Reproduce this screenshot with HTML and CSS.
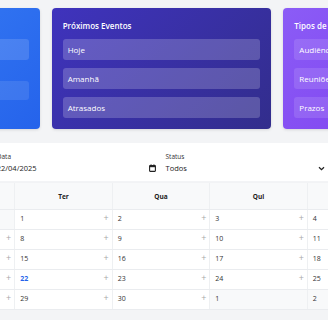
FILE: index.html
```html
<!DOCTYPE html>
<html lang="pt-BR">
<head>
<meta charset="utf-8">
<link rel="stylesheet" href="styles.css">
</head>
<body>
<div class="page">
  <section class="cards">
    <div class="card card-blue">
      <h3 class="card-title">Resumo</h3>
      <div class="stat stat-a"></div>
      <div class="stat stat-b"></div>
    </div>
    <div class="card card-indigo">
      <h3 class="card-title">Próximos Eventos</h3>
      <ul class="card-list">
        <li class="card-item">Hoje</li>
        <li class="card-item">Amanhã</li>
        <li class="card-item">Atrasados</li>
      </ul>
    </div>
    <div class="card card-purple">
      <h3 class="card-title">Tipos de Eventos</h3>
      <ul class="card-list">
        <li class="card-item">Audiências</li>
        <li class="card-item">Reuniões</li>
        <li class="card-item">Prazos</li>
      </ul>
    </div>
  </section>

  <section class="filters">
    <div class="field">
      <label class="field-label">Buscar</label>
      <div class="field-input"></div>
    </div>
    <div class="field">
      <label class="field-label">Data</label>
      <div class="field-input">
        <span>22/04/2025</span>
        <svg class="cal-icon" width="7" height="8" viewBox="0 0 7 8"><rect x="0.6" y="1.6" width="5.8" height="5.8" rx="0.6" fill="none" stroke="#222" stroke-width="1.1"/><rect x="0.6" y="1.6" width="5.8" height="1.6" fill="#222"/><rect x="1.6" y="0.3" width="0.9" height="1.6" fill="#222"/><rect x="4.5" y="0.3" width="0.9" height="1.6" fill="#222"/></svg>
      </div>
    </div>
    <div class="field">
      <label class="field-label">Status</label>
      <div class="field-input">
        <span>Todos</span>
        <svg class="chev" width="7" height="5" viewBox="0 0 7 5"><path d="M1 1.2 L3.5 3.6 L6 1.2" fill="none" stroke="#222" stroke-width="1.3"/></svg>
      </div>
    </div>
    <div class="field">
      <label class="field-label">Tipo</label>
      <div class="field-input"></div>
    </div>
  </section>

  <section class="calendar">
    <div class="cal-row cal-head">
      <div class="cell">Dom</div><div class="cell">Seg</div><div class="cell">Ter</div><div class="cell">Qua</div><div class="cell">Qui</div><div class="cell">Sex</div><div class="cell">Sáb</div>
    </div>
    <div class="cal-row">
      <div class="cell day other"><span>30</span></div>
      <div class="cell day other"><span>31</span></div>
      <div class="cell day"><span>1</span><b class="add">+</b></div>
      <div class="cell day"><span>2</span><b class="add">+</b></div>
      <div class="cell day"><span>3</span><b class="add">+</b></div>
      <div class="cell day"><span>4</span><b class="add">+</b></div>
      <div class="cell day"><span>5</span><b class="add">+</b></div>
    </div>
    <div class="cal-row">
      <div class="cell day"><span>6</span><b class="add">+</b></div>
      <div class="cell day"><span>7</span><b class="add">+</b></div>
      <div class="cell day"><span>8</span><b class="add">+</b></div>
      <div class="cell day"><span>9</span><b class="add">+</b></div>
      <div class="cell day"><span>10</span><b class="add">+</b></div>
      <div class="cell day"><span>11</span><b class="add">+</b></div>
      <div class="cell day"><span>12</span><b class="add">+</b></div>
    </div>
    <div class="cal-row">
      <div class="cell day"><span>13</span><b class="add">+</b></div>
      <div class="cell day"><span>14</span><b class="add">+</b></div>
      <div class="cell day"><span>15</span><b class="add">+</b></div>
      <div class="cell day"><span>16</span><b class="add">+</b></div>
      <div class="cell day"><span>17</span><b class="add">+</b></div>
      <div class="cell day"><span>18</span><b class="add">+</b></div>
      <div class="cell day"><span>19</span><b class="add">+</b></div>
    </div>
    <div class="cal-row">
      <div class="cell day"><span>20</span><b class="add">+</b></div>
      <div class="cell day"><span>21</span><b class="add">+</b></div>
      <div class="cell day today"><span>22</span><b class="add">+</b></div>
      <div class="cell day"><span>23</span><b class="add">+</b></div>
      <div class="cell day"><span>24</span><b class="add">+</b></div>
      <div class="cell day"><span>25</span><b class="add">+</b></div>
      <div class="cell day"><span>26</span><b class="add">+</b></div>
    </div>
    <div class="cal-row">
      <div class="cell day"><span>27</span><b class="add">+</b></div>
      <div class="cell day"><span>28</span><b class="add">+</b></div>
      <div class="cell day"><span>29</span><b class="add">+</b></div>
      <div class="cell day"><span>30</span><b class="add">+</b></div>
      <div class="cell day other"><span>1</span></div>
      <div class="cell day other"><span>2</span></div>
      <div class="cell day other"><span>3</span></div>
    </div>
  </section>
</div>
</body>
</html>
```
FILE: styles.css
```css
* { box-sizing: border-box; }
html, body { margin: 0; padding: 0; }
body {
  background: #f3f4f6;
  font-family: "Open Sans", "Noto Sans", sans-serif;
  color: #222;
  overflow: hidden;
}
.page {
  width: 683px;
  margin-left: -180px;
  padding-top: 8px;
}
.cards {
  display: grid;
  grid-template-columns: repeat(3, 1fr);
  gap: 12px;
}
.card {
  height: 121px;
  border-radius: 4px;
  padding: 11px;
  color: #fff;
  box-shadow: 0 1px 3px rgba(0,0,0,0.12);
}
.card-blue { background: linear-gradient(135deg, #3b82f6, #2563eb); }
.card-indigo { background: linear-gradient(135deg, #3f33bd, #322d8c); }
.card-purple { background: linear-gradient(135deg, #8b5cf6, #7c3aed); }
.card-title {
  margin: 0;
  height: 20px;
  padding-top: 1px;
  line-height: 12px;
  font-size: 8px;
  font-weight: 600;
}
.card-list {
  list-style: none;
  margin: 0;
  padding: 0;
  display: flex;
  flex-direction: column;
  gap: 8px;
}
.card-item {
  height: 21px;
  line-height: 21px;
  padding: 0 5px;
  font-size: 8px;
  border-radius: 3px;
  background: rgba(255,255,255,0.2);
}
.card-purple .card-item { background: rgba(255,255,255,0.12); }
.stat { border-radius: 3px; }
.stat-a { height: 21px; background: rgba(255,255,255,0.14); }
.stat-b { height: 19px; margin-top: 21px; background: rgba(255,255,255,0.1); }

.filters {
  margin-top: 14px;
  background: #fff;
  border-radius: 4px;
  padding: 8px 8px 6px;
  display: grid;
  grid-template-columns: repeat(4, 1fr);
  gap: 8px;
}
.field-label {
  display: block;
  height: 10px;
  padding-top: 1px;
  line-height: 9px;
  font-size: 6.5px;
  color: #333;
}
.field-input {
  height: 14px;
  display: flex;
  align-items: center;
  justify-content: space-between;
  padding: 0 1px 0 0;
  font-size: 7.5px;
  color: #222;
}
.cal-icon { margin-right: 1px; }

.calendar {
  margin-top: 2px;
  background: #fff;
  box-shadow: 0 1px 2px rgba(0,0,0,0.06);
}
.cal-row {
  display: grid;
  grid-template-columns: repeat(7, 1fr);
  border-bottom: 1px solid #eaecef;
}
.cal-head {
  height: 27px;
  background: #f8f9fa;
}
.cal-head .cell {
  display: flex;
  align-items: center;
  justify-content: center;
  font-size: 6.5px;
  font-weight: 700;
  color: #222;
}
.cell { border-right: 1px solid #eef0f2; }
.day {
  height: 19px;
  display: flex;
  justify-content: space-between;
  align-items: flex-start;
  padding: 4px 3px 0 5px;
  font-size: 7px;
  color: #333;
}
.day span { line-height: 9px; }
.add {
  font-weight: 400;
  font-size: 9px;
  line-height: 8px;
  color: #a8a8a8;
}
.other { background: #f8f9fa; }
.today span { color: #2563eb; font-weight: 700; }
```
